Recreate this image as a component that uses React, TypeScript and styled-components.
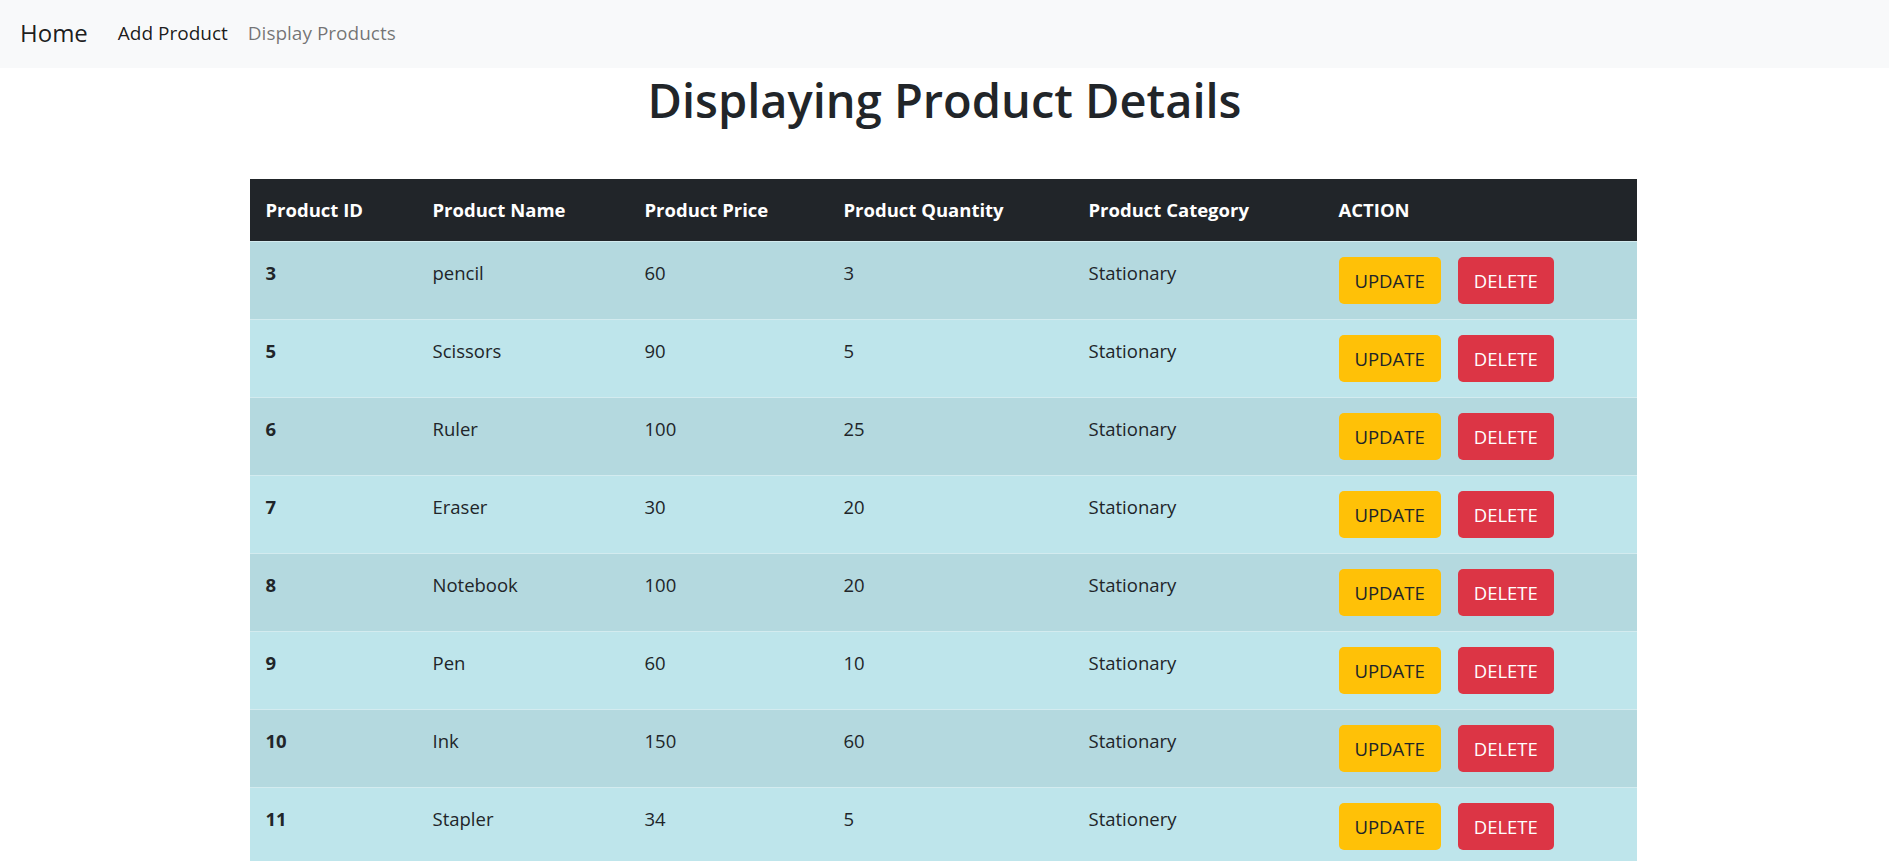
import React from "react";
import styled, { createGlobalStyle } from "styled-components";

const GlobalStyle = createGlobalStyle`
  html, body {
    margin: 0;
    padding: 0;
    background: #ffffff;
  }
  body {
    font-family: "Open Sans", "Noto Sans", "Liberation Sans", sans-serif;
    color: #212529;
  }
  * { box-sizing: border-box; }
`;

const Navbar = styled.nav`
  display: flex;
  align-items: center;
  height: 68px;
  padding: 0 20px 2px;
  background: #f8f9fa;
`;

const Brand = styled.a`
  font-size: 24px;
  color: rgba(0, 0, 0, 0.9);
  text-decoration: none;
  margin-right: 20px;
  line-height: 36px;
`;

const NavLink = styled.a<{ $active?: boolean }>`
  font-size: 19px;
  padding: 0 10px;
  line-height: 30px;
  text-decoration: none;
  color: ${(p) => (p.$active ? "rgba(0,0,0,0.9)" : "rgba(0,0,0,0.55)")};
`;

const Title = styled.h1`
  margin: 2px 0 0;
  text-align: center;
  font-size: 47px;
  font-weight: 600;
  line-height: 60px;
  color: #212529;
`;

const TableWrap = styled.div`
  width: 1387px;
  margin: 49px auto 0 calc(50% - 695px);
`;

const Table = styled.table`
  width: 100%;
  border-collapse: collapse;
  table-layout: fixed;
  font-size: 18.5px;
`;

const Th = styled.th`
  background: #212529;
  color: #ffffff;
  font-weight: 700;
  text-align: left;
  padding: 15px 16px;
  line-height: 32px;
`;

const Row = styled.tr<{ $odd: boolean }>`
  background: ${(p) => (p.$odd ? "#b4d9df" : "#bee5eb")};
`;

const Td = styled.td<{ $bold?: boolean }>`
  padding: 15px 16px;
  vertical-align: top;
  line-height: 32px;
  border-top: 1px solid #d3ebef;
  font-weight: ${(p) => (p.$bold ? 700 : 400)};
  color: #212529;
`;

const ActionCell = styled.div`
  display: flex;
  gap: 17px;
`;

const Button = styled.button<{ $variant: "warning" | "danger" }>`
  height: 47px;
  padding: 0 16px;
  border: none;
  border-radius: 5px;
  font-family: inherit;
  font-size: 18.5px;
  cursor: pointer;
  background: ${(p) => (p.$variant === "warning" ? "#ffc107" : "#dc3545")};
  color: ${(p) => (p.$variant === "warning" ? "#212529" : "#ffffff")};
`;

const columns = [
  { label: "Product ID", width: 167 },
  { label: "Product Name", width: 212 },
  { label: "Product Price", width: 199 },
  { label: "Product Quantity", width: 245 },
  { label: "Product Category", width: 250 },
  { label: "ACTION", width: 314 },
];

const products = [
  { id: 3, name: "pencil", price: 60, qty: 3, cat: "Stationary" },
  { id: 5, name: "Scissors", price: 90, qty: 5, cat: "Stationary" },
  { id: 6, name: "Ruler", price: 100, qty: 25, cat: "Stationary" },
  { id: 7, name: "Eraser", price: 30, qty: 20, cat: "Stationary" },
  { id: 8, name: "Notebook", price: 100, qty: 20, cat: "Stationary" },
  { id: 9, name: "Pen", price: 60, qty: 10, cat: "Stationary" },
  { id: 10, name: "Ink", price: 150, qty: 60, cat: "Stationary" },
  { id: 11, name: "Stapler", price: 34, qty: 5, cat: "Stationery" },
];

export default function App() {
  return (
    <>
      <GlobalStyle />
      <Navbar>
        <Brand href="#">Home</Brand>
        <NavLink href="#" $active>
          Add Product
        </NavLink>
        <NavLink href="#">Display Products</NavLink>
      </Navbar>
      <Title>Displaying Product Details</Title>
      <TableWrap>
        <Table>
          <colgroup>
            {columns.map((c) => (
              <col key={c.label} style={{ width: c.width }} />
            ))}
          </colgroup>
          <thead>
            <tr>
              {columns.map((c) => (
                <Th key={c.label}>{c.label}</Th>
              ))}
            </tr>
          </thead>
          <tbody>
            {products.map((p, i) => (
              <Row key={p.id} $odd={i % 2 === 0}>
                <Td $bold>{p.id}</Td>
                <Td>{p.name}</Td>
                <Td>{p.price}</Td>
                <Td>{p.qty}</Td>
                <Td>{p.cat}</Td>
                <Td>
                  <ActionCell>
                    <Button $variant="warning">UPDATE</Button>
                    <Button $variant="danger">DELETE</Button>
                  </ActionCell>
                </Td>
              </Row>
            ))}
          </tbody>
        </Table>
      </TableWrap>
    </>
  );
}
